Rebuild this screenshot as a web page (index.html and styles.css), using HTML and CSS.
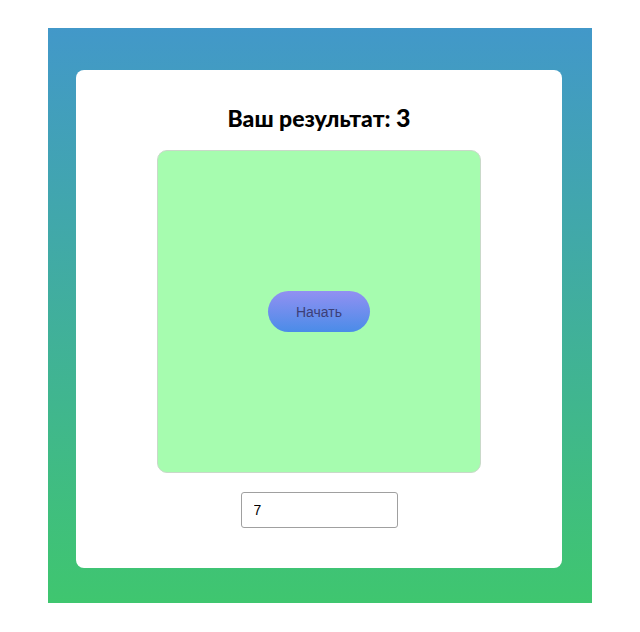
FILE: index.html
```html
<!DOCTYPE html>
<html lang="ru">
<head>
<meta charset="utf-8">
<title>Игра</title>
<link rel="stylesheet" href="styles.css">
</head>
<body>
<div class="frame">
  <div class="card">
    <h2 class="title">Ваш результат: <span class="score">3</span></h2>
    <div class="field">
      <button class="start">Начать</button>
    </div>
    <input class="count" type="text" value="7">
  </div>
</div>
</body>
</html>
```
FILE: styles.css
```css
html, body {
  margin: 0;
  padding: 0;
  background: #ffffff;
}
body {
  padding: 28px 48px;
}
.frame {
  width: 544px;
  height: 575px;
  box-sizing: border-box;
  padding: 42px 30px 35px 28px;
  background: linear-gradient(to bottom, #4298c9, #3fc66f);
}
.card {
  height: 498px;
  background: #ffffff;
  border-radius: 8px;
  display: flex;
  flex-direction: column;
  align-items: center;
  padding-top: 32px;
  box-sizing: border-box;
}
.title {
  margin: 0;
  font-family: Lato, "Noto Sans", sans-serif;
  font-weight: 900;
  font-size: 23px;
  line-height: 30px;
  color: #000;
}
.score {
  font-size: 25px;
  font-weight: 900;
}
.field {
  margin-top: 17px;
  width: 324px;
  height: 323px;
  box-sizing: border-box;
  background: #a6fcaf;
  border: 1px solid #c9d9c9;
  border-radius: 10px;
  display: flex;
  align-items: center;
  justify-content: center;
}
.start {
  width: 102px;
  height: 41px;
  border: none;
  border-radius: 21px;
  background: linear-gradient(to bottom, #9290f2, #4a8ce8);
  color: #3c3f78;
  font-family: "Liberation Sans", Arial, sans-serif;
  font-size: 14px;
  cursor: pointer;
}
.count {
  margin-top: 19px;
  width: 157px;
  height: 36px;
  box-sizing: border-box;
  border: 1px solid #a0a0a0;
  border-radius: 3px;
  padding: 0 12px;
  font-family: "Liberation Sans", Arial, sans-serif;
  font-size: 14px;
  color: #000;
  background: #fff;
}
```
